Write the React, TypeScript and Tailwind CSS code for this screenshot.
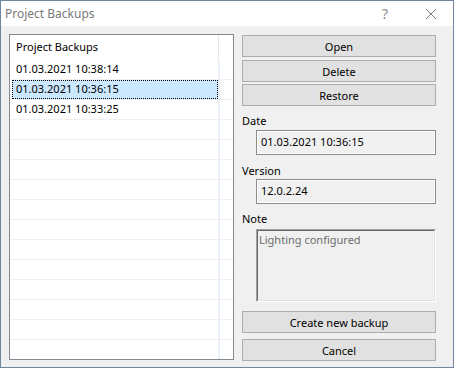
import React from 'react';

const rows = ['01.03.2021 10:38:14', '01.03.2021 10:36:15', '01.03.2021 10:33:25'];
const selected = 1;

const Button: React.FC<{ label: string; className?: string }> = ({ label, className = '' }) => (
  <button
    className={`h-[22px] w-full border border-[#adadad] bg-[#e1e1e1] text-[11px] leading-none text-black ${className}`}
  >
    {label}
  </button>
);

const App: React.FC = () => {
  const lines = Array.from({ length: 14 }, (_, i) => rows[i] ?? '');

  return (
    <div
      className="flex h-[368px] w-[454px] flex-col border border-[#70869e] bg-[#f0f0f0] text-[11px] text-black"
      style={{ fontFamily: '"Noto Sans", "Open Sans", sans-serif' }}
    >
      {/* Title bar */}
      <div className="flex h-[25px] shrink-0 items-center bg-white pl-[4px]">
        <span className="text-[12px] text-[#7a7a7a]">Project Backups</span>
        <span className="ml-auto mr-[37px] text-[14px] text-[#8a8a8a]">?</span>
        <svg width="12" height="12" viewBox="0 0 12 12" className="mr-[16px]">
          <path d="M1 1 L11 11 M11 1 L1 11" stroke="#7a7a7a" strokeWidth="1" fill="none" />
        </svg>
      </div>

      {/* Body */}
      <div className="flex flex-1 pl-[8px] pt-[8px]">
        {/* List */}
        <div className="flex h-[326px] w-[225px] flex-col overflow-hidden border border-[#828790] bg-white">
          <div className="flex h-[25px] shrink-0">
            <div className="flex w-[209px] items-center border-r border-[#e5e5e5] pl-[6px]">Project Backups</div>
          </div>
          {lines.map((text, i) => (
            <div key={i} className="flex h-[20px] shrink-0 border-b border-[#f0f0f0]">
              <div className="flex w-[210px] border-r-2 border-[#eaf0f9] pl-[2px]">
                {i === selected ? (
                  <div className="flex flex-1 items-center border border-dotted border-black bg-[#cce8ff] pl-[3px]">
                    {text}
                  </div>
                ) : (
                  <div className="flex flex-1 items-center pl-[4px]">{text}</div>
                )}
              </div>
            </div>
          ))}
          <div className="flex flex-1">
            <div className="w-[210px] border-r-2 border-[#eaf0f9]" />
          </div>
        </div>

        {/* Right column */}
        <div className="ml-[8px] flex w-[194px] flex-col">
          <Button label="Open" className="mt-[1px]" />
          <Button label="Delete" className="mt-[3px]" />
          <Button label="Restore" className="mt-[2px]" />

          <div className="mt-[8px] h-[14px] leading-[14px]">Date</div>
          <div className="ml-[14px] mt-[2px] flex h-[25px] items-center border border-[#8c8c8c] pl-[4px] shadow-[inset_0_0_0_1px_#ffffff]">
            01.03.2021 10:36:15
          </div>

          <div className="mt-[9px] h-[14px] leading-[14px]">Version</div>
          <div className="ml-[14px] mt-[1px] flex h-[25px] items-center border border-[#8c8c8c] pl-[4px] shadow-[inset_0_0_0_1px_#ffffff]">
            12.0.2.24
          </div>

          <div className="mt-[8px] h-[14px] leading-[14px]">Note</div>
          <div className="ml-[14px] mt-[3px] h-[73px] border border-b-white border-l-[#a0a0a0] border-r-white border-t-[#a0a0a0]">
            <div className="h-full border border-b-[#e3e3e3] border-l-[#696969] border-r-[#e3e3e3] border-t-[#696969] pl-[1px] pt-[1px] text-[#6d6d6d]">
              Lighting configured
            </div>
          </div>

          <Button label="Create new backup" className="mt-[9px]" />
          <Button label="Cancel" className="mt-[6px]" />
        </div>
      </div>
    </div>
  );
};

export default App;
